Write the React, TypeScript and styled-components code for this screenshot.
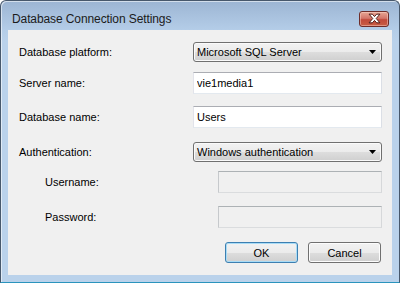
import styled, { createGlobalStyle } from 'styled-components';

const GlobalStyle = createGlobalStyle`
  body {
    margin: 0;
    font-family: 'Liberation Sans', Arial, sans-serif;
  }
`;

const Window = styled.div`
  width: 400px;
  height: 283px;
  box-sizing: border-box;
  display: flex;
  flex-direction: column;
  border: 1px solid #47586c;
  border-bottom-color: #2a94bd;
  border-radius: 6px 6px 0 0;
  background: linear-gradient(#9cb5d3 0px, #b4cde8 29px, #bad2eb 40px);
  box-shadow: inset 1px 1px 0 rgba(255, 255, 255, 0.55);
  overflow: hidden;
`;

const TitleBar = styled.div`
  height: 29px;
  flex: none;
  display: flex;
  align-items: center;
  justify-content: space-between;
  padding: 6px 10px 0 11px;
  box-sizing: border-box;
`;

const Title = styled.span`
  font-family: 'Liberation Sans', Arial, sans-serif;
  font-size: 12px;
  color: #1b1b1b;
  letter-spacing: -0.1px;
`;

const CloseButton = styled.div`
  width: 30px;
  height: 16px;
  box-sizing: border-box;
  border: 1px solid #6e2d2a;
  border-radius: 3px;
  background: linear-gradient(#e7a694 0%, #d4766a 45%, #c14a3a 55%, #c85d44 100%);
  box-shadow: inset 0 0 0 1px rgba(255, 220, 210, 0.45);
  display: flex;
  align-items: center;
  justify-content: center;
`;

const Body = styled.div`
  flex: 1;
  padding: 0 7px 7px 7px;
  display: flex;
`;

const Client = styled.div`
  flex: 1;
  background: #f0f0f0;
  display: flex;
  flex-direction: column;
`;

const Row = styled.div<{ $top: number; $indent?: boolean }>`
  display: flex;
  align-items: center;
  justify-content: space-between;
  margin-top: ${({ $top }) => $top}px;
  padding: 0 10px 0 ${({ $indent }) => ($indent ? 37 : 11)}px;
`;

const Label = styled.span`
  font-size: 11px;
  color: #000;
`;

const Combo = styled.div`
  width: 189px;
  height: 20px;
  box-sizing: border-box;
  border: 1px solid #707070;
  border-radius: 3px;
  background: linear-gradient(#f2f2f2 0%, #ebebeb 50%, #dddddd 51%, #cfcfcf 100%);
  box-shadow: inset 0 0 0 1px #fafafa;
  display: flex;
  align-items: center;
  justify-content: space-between;
  padding: 0 5px 0 3px;
  font-size: 11px;
  color: #000;
`;

const TextBox = styled.input<{ $width?: number }>`
  width: ${({ $width }) => $width ?? 189}px;
  height: 22px;
  box-sizing: border-box;
  margin: 0;
  padding: 0 3px;
  border: 1px solid;
  border-color: #abadb3 #dbdfe6 #e3e9ef #e2e3ea;
  background: #fff;
  font-family: 'Liberation Sans', Arial, sans-serif;
  font-size: 11px;
  color: #000;
  outline: none;

  &:disabled {
    background: #f0f0f0;
    border-color: #adb2b5 #d6d8da #dadcde #c6c9cc;
  }
`;

const ButtonRow = styled.div`
  display: flex;
  justify-content: flex-end;
  gap: 10px;
  margin-top: 14px;
  padding-right: 11px;
`;

const Button = styled.div<{ $default?: boolean }>`
  width: 73px;
  height: 21px;
  box-sizing: border-box;
  border: 1px solid ${({ $default }) => ($default ? '#3c7fb1' : '#707070')};
  border-radius: 3px;
  background: linear-gradient(#f2f2f2 0%, #ebebeb 50%, #dddddd 51%, #cfcfcf 100%);
  box-shadow: inset 0 0 0 1px ${({ $default }) => ($default ? '#a9dcf6' : '#fcfcfc')};
  display: flex;
  align-items: center;
  justify-content: center;
  font-size: 11px;
  color: #000;
`;

const Arrow = () => (
  <svg width='7' height='4' viewBox='0 0 7 4'>
    <polygon points='0,0 7,0 3.5,4' fill='#000' />
  </svg>
);

const CloseGlyph = () => (
  <svg width='13' height='11' viewBox='0 0 12 10'>
    <path
      d='M1 1 H4 L6 3.2 L8 1 H11 L7.6 5 L11 9 H8 L6 6.8 L4 9 H1 L4.4 5 Z'
      fill='#fff'
      stroke='#4a1a16'
      strokeWidth='0.9'
      strokeLinejoin='round'
    />
  </svg>
);

export default function App() {
  return (
    <>
      <GlobalStyle />
      <Window>
        <TitleBar>
          <Title>Database Connection Settings</Title>
          <CloseButton>
            <CloseGlyph />
          </CloseButton>
        </TitleBar>
        <Body>
          <Client>
            <Row $top={12}>
              <Label>Database platform:</Label>
              <Combo>
                <span>Microsoft SQL Server</span>
                <Arrow />
              </Combo>
            </Row>
            <Row $top={10}>
              <Label>Server name:</Label>
              <TextBox value='vie1media1' readOnly />
            </Row>
            <Row $top={12}>
              <Label>Database name:</Label>
              <TextBox value='Users' readOnly />
            </Row>
            <Row $top={14}>
              <Label>Authentication:</Label>
              <Combo>
                <span>Windows authentication</span>
                <Arrow />
              </Combo>
            </Row>
            <Row $top={9} $indent>
              <Label>Username:</Label>
              <TextBox $width={164} disabled />
            </Row>
            <Row $top={13} $indent>
              <Label>Password:</Label>
              <TextBox $width={164} type='password' disabled />
            </Row>
            <ButtonRow>
              <Button $default>OK</Button>
              <Button>Cancel</Button>
            </ButtonRow>
          </Client>
        </Body>
      </Window>
    </>
  );
}
